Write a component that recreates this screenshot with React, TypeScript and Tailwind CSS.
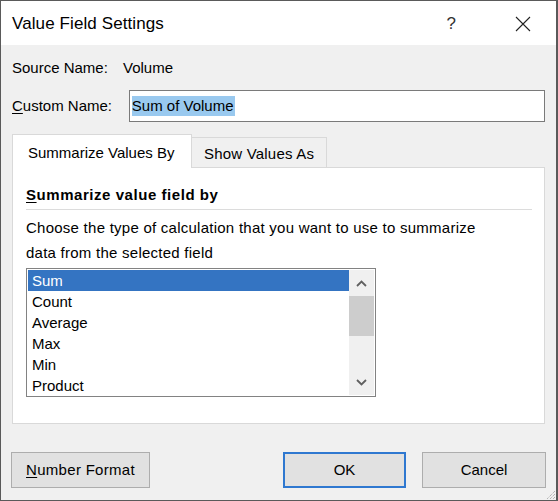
import React from "react";

const items = ["Sum", "Count", "Average", "Max", "Min", "Product"];

function Chevron({ up }: { up?: boolean }) {
  return (
    <svg width="11" height="7" viewBox="0 0 11 7" className="block">
      <path
        d={up ? "M1 6 L5.5 1.5 L10 6" : "M1 1 L5.5 5.5 L10 1"}
        fill="none"
        stroke="#606060"
        strokeWidth="1.8"
      />
    </svg>
  );
}

export default function App() {
  return (
    <div className="relative w-[558px] h-[501px] flex flex-col bg-[#f0f0f0] border-t border-l border-b border-r-2 border-[#5a5a5a] font-['Liberation_Sans',Arial,sans-serif] text-[15px] text-black">
      {/* Title bar */}
      <div className="h-[44px] bg-white flex items-center pl-[11px] pt-[2px] shrink-0">
        <span className="text-[17px] tracking-[0.1px] flex-1">Value Field Settings</span>
        <span className="text-[17px] text-[#333] mr-[59px]">?</span>
        <svg width="16" height="16" viewBox="0 0 16 16" className="mr-[25px]">
          <path d="M1 1 L15 15 M15 1 L1 15" stroke="#222" strokeWidth="1.1" />
        </svg>
      </div>

      <div className="flex flex-col px-[11px]">
        {/* Source name */}
        <div className="flex mt-[13px] leading-[20px]">
          <span className="w-[111px]">Source Name:</span>
          <span>Volume</span>
        </div>

        {/* Custom name */}
        <div className="flex items-center mt-[12px] h-[32px]">
          <span className="w-[117px]">
            <span className="underline underline-offset-2">C</span>ustom Name:
          </span>
          <div className="w-[417px] h-[32px] border border-[#7a7a7a] bg-white flex items-center pl-[2px]">
            <span className="bg-[#99c9ef] leading-[20px] pr-[1px]">Sum of Volume</span>
          </div>
        </div>

        {/* Tabs */}
        <div className="flex items-end h-[33px] mt-[12px]">
          <div className="relative z-10 h-[34px] -mb-px w-[180px] bg-white border-t border-l border-r border-[#d9d9d9] pl-[15px] pt-[8px] leading-[20px]">
            Summarize Values By
          </div>
          <div className="h-[30px] w-[135px] bg-[#f0f0f0] border-t border-r border-[#d9d9d9] pl-[12px] pt-[6px] leading-[20px] tracking-[0.2px]">
            Show Values As
          </div>
        </div>

        {/* Panel */}
        <div className="h-[257px] bg-white border border-[#d9d9d9] pl-[13px] pr-[12px] flex flex-col">
          <div className="mt-[17px] font-bold leading-[20px] tracking-[0.55px]">
            <span className="underline underline-offset-2">S</span>ummarize value field by
          </div>
          <div className="mt-[4px] h-px bg-[#dcdcdc]" />
          <div className="mt-[5px] leading-[25px] tracking-[0.25px]">
            Choose the type of calculation that you want to use to summarize
            <br />
            data from the selected field
          </div>
          <div className="mt-[3px] w-[350px] h-[129px] border border-[#828282] bg-white p-[1px] flex">
            <div className="flex-1 flex flex-col">
              {items.map((it, i) => (
                <div
                  key={it}
                  className={`h-[21px] leading-[21px] pl-[4px] ${
                    i === 0 ? "bg-[#3474c2] text-white" : ""
                  }`}
                >
                  {it}
                </div>
              ))}
            </div>
            <div className="w-[25px] bg-[#f0f0f0] flex flex-col">
              <div className="h-[25px] flex items-center justify-center pt-[2px]">
                <Chevron up />
              </div>
              <div className="mt-[1px] h-[40px] bg-[#cdcdcd]" />
              <div className="flex-1" />
              <div className="h-[25px] flex items-center justify-center">
                <Chevron />
              </div>
            </div>
          </div>
        </div>

        {/* Buttons */}
        <div className="flex justify-between mt-[28px] -mx-px">
          <button className="w-[139px] h-[36px] bg-[#e1e1e1] border border-[#adadad] tracking-[0.3px]">
            <span className="underline underline-offset-2">N</span>umber Format
          </button>
          <div className="flex gap-[16px]">
            <button className="w-[123px] h-[36px] bg-[#e1e1e1] border-2 border-[#2f78d0]">
              OK
            </button>
            <button className="w-[124px] h-[36px] bg-[#e1e1e1] border border-[#adadad]">
              Cancel
            </button>
          </div>
        </div>
      </div>

      {/* Resize grip */}
      <svg
        width="12"
        height="12"
        viewBox="0 0 12 12"
        className="absolute right-0 bottom-0"
      >
        <path
          d="M11 3 L3 11 M11 6 L6 11 M11 9 L9 11"
          stroke="#9a9a9a"
          strokeWidth="1"
          strokeDasharray="1 1"
        />
      </svg>
    </div>
  );
}
